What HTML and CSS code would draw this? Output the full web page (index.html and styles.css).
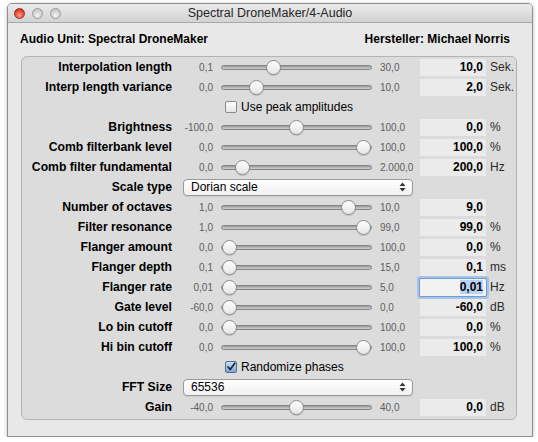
FILE: index.html
```html
<!DOCTYPE html>
<html lang="de">
<head>
    <meta charset="UTF-8">
    <title>Spectral DroneMaker/4-Audio</title>
    <link rel="stylesheet" href="styles.css">
</head>
<body>
    <div id="window">
        <div id="titlebar">
            <div class="lights">
                <span class="light close"></span>
                <span class="light"></span>
                <span class="light"></span>
            </div>
            <div class="title">Spectral DroneMaker/4-Audio</div>
            <div></div>
        </div>
        <div id="content">
            <div id="au-header">
                <span>Audio Unit: Spectral DroneMaker</span>
                <span>Hersteller: Michael Norris</span>
            </div>
            <div id="params"></div>
        </div>
    </div>
    <script>
    // Parameter der Audio Unit
    const params = [
        { label: 'Interpolation length', lo: 0.1, hi: 30, v: 10, unit: 'Sek.' },
        { label: 'Interp length variance', lo: 0, hi: 10, v: 2, unit: 'Sek.' },
        { type: 'check', label: 'Use peak amplitudes', checked: false },
        { label: 'Brightness', lo: -100, hi: 100, v: 0, unit: '%' },
        { label: 'Comb filterbank level', lo: 0, hi: 100, v: 100, unit: '%' },
        { label: 'Comb filter fundamental', lo: 0, hi: 2000, v: 200, unit: 'Hz' },
        { type: 'popup', label: 'Scale type', value: 'Dorian scale' },
        { label: 'Number of octaves', lo: 1, hi: 10, v: 9, unit: '' },
        { label: 'Filter resonance', lo: 1, hi: 99, v: 99, unit: '%' },
        { label: 'Flanger amount', lo: 0, hi: 100, v: 0, unit: '%' },
        { label: 'Flanger depth', lo: 0.1, hi: 15, v: 0.1, unit: 'ms' },
        { label: 'Flanger rate', lo: 0.01, hi: 5, v: 0.01, dec: 2, unit: 'Hz', focus: true },
        { label: 'Gate level', lo: -60, hi: 0, v: -60, unit: 'dB' },
        { label: 'Lo bin cutoff', lo: 0, hi: 100, v: 0, unit: '%' },
        { label: 'Hi bin cutoff', lo: 0, hi: 100, v: 100, unit: '%' },
        { type: 'check', label: 'Randomize phases', checked: true },
        { type: 'popup', label: 'FFT Size', value: '65536' },
        { label: 'Gain', lo: -40, hi: 40, v: 0, unit: 'dB' }
    ];

    // 2000 -> "2.000,0"
    function fmt(n, dec) {
        const parts = Math.abs(n).toFixed(dec).split('.');
        parts[0] = parts[0].replace(/\B(?=(\d{3})+(?!\d))/g, '.');
        return (n < 0 ? '-' : '') + parts.join(',');
    }

    const arrows = `<svg width="7" height="10" viewBox="0 0 7 10">
        <path d="M3.5 0.5 L6.5 4 L0.5 4 Z M3.5 9.5 L6.5 6 L0.5 6 Z" fill="#333"/>
    </svg>`;
    const tick = `<svg width="12" height="12" viewBox="0 0 12 12">
        <path d="M2.5 6 L5 9 L10.5 1.5" fill="none" stroke="#1b2433" stroke-width="2" stroke-linecap="round" stroke-linejoin="round"/>
    </svg>`;

    function renderParams() {
        let html = '';
        params.forEach(p => {
            if (p.type === 'check') {
                html += `<div class="row">
                    <span class="label"></span>
                    <label class="check${p.checked ? ' on' : ''}">
                        <span class="box">${p.checked ? tick : ''}</span>${p.label}
                    </label>
                </div>`;
            } else if (p.type === 'popup') {
                html += `<div class="row">
                    <span class="label">${p.label}</span>
                    <div class="popup"><span>${p.value}</span>${arrows}</div>
                </div>`;
            } else {
                const dec = p.dec || 1;
                const f = (p.v - p.lo) / (p.hi - p.lo);
                html += `<div class="row">
                    <span class="label">${p.label}</span>
                    <span class="min">${fmt(p.lo, dec)}</span>
                    <div class="slider"><div class="track">
                        <span class="knob" style="left: calc(${f.toFixed(4)} * (100% - 15px));"></span>
                    </div></div>
                    <span class="max">${fmt(p.hi, 1)}</span>
                    <span class="field${p.focus ? ' focus' : ''}"><span class="val">${fmt(p.v, dec)}</span></span>
                    <span class="unit">${p.unit}</span>
                </div>`;
            }
        });
        document.getElementById('params').innerHTML = html;
    }

    renderParams();
    </script>
</body>
</html>
```

FILE: styles.css
```css
body {
    margin: 0;
    background: #fff;
    font-family: 'Liberation Sans', Arial, sans-serif;
    color: #000;
}
#window {
    margin: 3px 0 0 7px;
    width: 526px;
    height: 434px;
    box-sizing: border-box;
    border: 1px solid #8e8e8e;
    border-radius: 5px 5px 0 0;
    background: #e8e8e8;
    box-shadow: 0 1px 4px rgba(0,0,0,.25);
    overflow: hidden;
}
#titlebar {
    height: 18px;
    display: grid;
    grid-template-columns: 1fr auto 1fr;
    align-items: center;
    background: linear-gradient(#ebebeb, #d2d2d2);
    border-bottom: 1px solid #a8a8a8;
}
.lights {
    display: flex;
    gap: 7px;
    padding-left: 6px;
}
.light {
    width: 11px;
    height: 11px;
    border-radius: 50%;
    box-sizing: border-box;
    border: 1px solid #9a9a9a;
    background: radial-gradient(circle at 50% 70%, #f4f4f4, #c8c8c8 70%);
}
.light.close {
    border-color: #9c2e24;
    background: radial-gradient(circle at 50% 70%, #ff9d8a, #e0442f 60%, #b52a1c);
}
.title {
    font-size: 12.5px;
    color: #262626;
}
#content {
    padding: 8px 15px 0 13px;
}
#au-header {
    display: flex;
    justify-content: space-between;
    font-weight: bold;
    font-size: 12px;
    padding: 0 7px 0 0;
    margin-left: -1px;
    height: 16px;
    line-height: 16px;
    margin-bottom: 9px;
}
#params {
    border: 1px solid #b4b4b4;
    border-radius: 6px;
    background: #dcdcdc;
    padding-bottom: 2px;
}
.row {
    display: grid;
    grid-template-columns: 152px 39px 167px 40px 66px 1fr;
    height: 20px;
    align-items: center;
}
.label {
    text-align: right;
    padding-right: 2px;
    font-weight: bold;
    font-size: 12.2px;
    white-space: nowrap;
}
.min, .max {
    font-size: 10px;
    color: #5e5e5e;
}
.min { text-align: right; }
.max { padding-left: 0; }
.slider {
    padding: 0 8px;
}
.track {
    position: relative;
    height: 5px;
    border-radius: 3px;
    box-sizing: border-box;
    border: 1px solid #858585;
    background: linear-gradient(#9a9a9a, #d0d0d0);
}
.knob {
    position: absolute;
    top: -6px;
    width: 15px;
    height: 15px;
    box-sizing: border-box;
    border-radius: 50%;
    border: 1px solid #8c8c8c;
    background: linear-gradient(#fdfdfd, #e6e6e6);
    box-shadow: 0 1px 1px rgba(0,0,0,.15);
}
.field {
    height: 17px;
    background: #ebebeb;
    text-align: right;
    padding-right: 3px;
    font-size: 12px;
    font-weight: bold;
    line-height: 17px;
}
.field.focus {
    box-shadow: 0 0 0 1px #6e9bd1, 0 0 0 3px #a7c3e6;
    background: #f2f2f2;
    border-radius: 1px;
}
.field.focus .val { background: #b6d2f5; }
.unit {
    padding-left: 4px;
    font-size: 12px;
    color: #2a2a2a;
}
.popup {
    grid-column: 2 / span 3;
    margin-left: 9px;
    width: 230px;
    height: 17px;
    box-sizing: border-box;
    border: 1px solid #9a9a9a;
    border-radius: 4px;
    background: linear-gradient(#ffffff, #f0f0f0);
    display: flex;
    align-items: center;
    justify-content: space-between;
    padding: 0 6px 0 7px;
    font-size: 12px;
    box-shadow: 0 1px 1px rgba(0,0,0,.08);
}
.popup svg { display: block; }
.check {
    grid-column: 3 / span 4;
    margin-left: 12px;
    display: flex;
    align-items: center;
    gap: 4px;
    font-size: 12px;
}
.box {
    width: 12px;
    height: 12px;
    box-sizing: border-box;
    border: 1px solid #8a8a8a;
    border-radius: 2px;
    background: linear-gradient(#ffffff, #e4e4e4);
    display: flex;
    align-items: center;
    justify-content: center;
}
.check.on .box {
    border-color: #4f6f97;
    background: linear-gradient(#c9dcf3, #7ea5d6);
}
.box svg { display: block; }
```
